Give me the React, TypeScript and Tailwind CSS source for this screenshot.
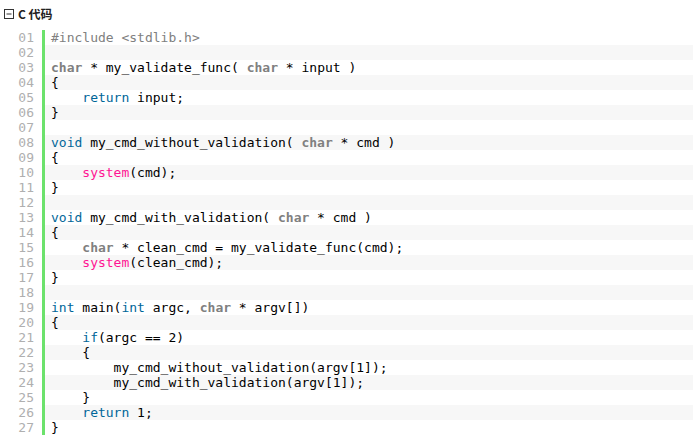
type Tok = [string, string];

const K = "text-[#006699]";
const T = "text-[#808080] font-bold";
const F = "text-[#ff1493]";
const P = "text-[#808080]";

const lines: Tok[][] = [
  [["#include <stdlib.h>", P]],
  [],
  [["char", T], [" * my_validate_func( ", ""], ["char", T], [" * input )", ""]],
  [["{", ""]],
  [["    ", ""], ["return", K], [" input;", ""]],
  [["}", ""]],
  [],
  [["void", K], [" my_cmd_without_validation( ", ""], ["char", T], [" * cmd )", ""]],
  [["{", ""]],
  [["    ", ""], ["system", F], ["(cmd);", ""]],
  [["}", ""]],
  [],
  [["void", K], [" my_cmd_with_validation( ", ""], ["char", T], [" * cmd )", ""]],
  [["{", ""]],
  [["    ", ""], ["char", T], [" * clean_cmd = my_validate_func(cmd);", ""]],
  [["    ", ""], ["system", F], ["(clean_cmd);", ""]],
  [["}", ""]],
  [],
  [["int", K], [" main(", ""], ["int", K], [" argc, ", ""], ["char", T], [" * argv[])", ""]],
  [["{", ""]],
  [["    ", ""], ["if", K], ["(argc == 2)", ""]],
  [["    {", ""]],
  [["        my_cmd_without_validation(argv[1]);", ""]],
  [["        my_cmd_with_validation(argv[1]);", ""]],
  [["    }", ""]],
  [["    ", ""], ["return", K], [" 1;", ""]],
  [["}", ""]],
];

export default function App() {
  return (
    <div className="w-[693px] h-[441px] bg-white overflow-hidden">
      <div className="h-[30px] flex items-start pt-[5px] pl-[4px] gap-[4px] font-['Noto_Sans_CJK_SC',sans-serif] text-[12px] font-bold text-[#222]">
        <svg width="10" height="10" viewBox="0 0 10 10" className="mt-[4px]">
          <rect x="0.5" y="0.5" width="9" height="9" fill="none" stroke="#333" />
          <line x1="2.5" y1="5" x2="7.5" y2="5" stroke="#333" />
        </svg>
        <span className="leading-[18px]">C 代码</span>
      </div>
      <div className="font-['DejaVu_Sans_Mono',monospace] text-[13px] leading-[15px]">
        {lines.map((toks, i) => (
          <div key={i} className={`flex h-[15px] ${i % 2 === 1 ? "bg-[#f7f7f7]" : "bg-white"}`}>
            <div className="w-[42px] shrink-0 pr-[8px] text-right text-[#afafaf] bg-white">
              {String(i + 1).padStart(2, "0")}
            </div>
            <div className="w-[3px] shrink-0 bg-[#6ce26c]" />
            <div className="pl-[6px] whitespace-pre text-black">
              {toks.map((t, j) => (
                <span key={j} className={t[1]}>
                  {t[0]}
                </span>
              ))}
            </div>
          </div>
        ))}
      </div>
    </div>
  );
}
